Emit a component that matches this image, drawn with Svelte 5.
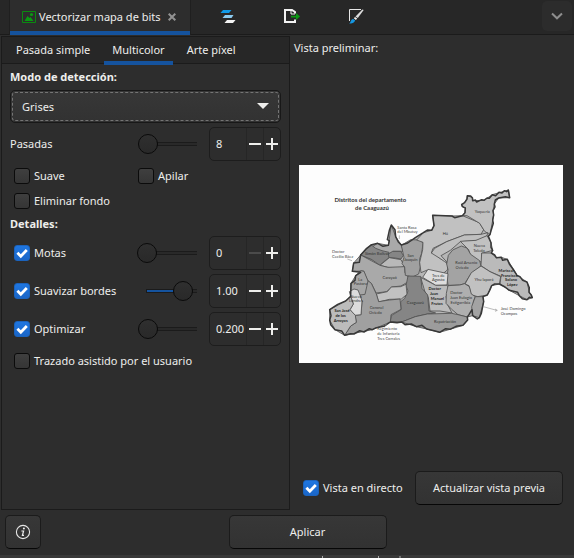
<script>
  let mode = $state('Grises');
  let scans = $state({ id: 'scans', label: 'Pasadas', value: '8', pos: 2 });
  let details = $state([
    { id: 'speckles', label: 'Motas', value: '0', pos: 0, on: true, atMin: true },
    { id: 'smooth', label: 'Suavizar bordes', value: '1.00', pos: 90, on: true },
    { id: 'optimize', label: 'Optimizar', value: '0.200', pos: 2, on: true }
  ]);
  let live = $state(true);

  const outline =
    'M403 107L411 98L412 84L403 80L401 73L410 68L417 57L418 47L428 48L433 53L434 62L442 60L446 66L461 59L468 61L477 54L484 55L493 44L503 47L513 37L522 39L529 32L536 35L541 30L545 53L532 50L512 54L502 60L499 72L501 81L495 92L497 105L494 120L496 130L490 149L486 164L481 168L489 188L489 202L494 211L490 219L500 225L505 233L520 232L524 241L538 238L544 252L557 270L567 286L576 290L584 301L597 306L604 323L603 337L610 345L613 353L604 352L597 359L583 356L574 347L569 337L544 331L531 321L514 312L500 312L491 317L485 331L478 345L465 350L467 365L460 400L454 413L448 417L434 407L432 389L423 404L418 411L419 420L405 436L384 439L366 448L353 446L335 457L318 452L296 447L282 436L265 440L250 432L231 434L221 426L207 428L187 426L168 439L145 443L133 449L124 446L108 456L95 452L78 462L68 461L50 466L41 453L21 449L8 434L5 420L9 407L5 389L29 373L53 363L68 349L69 310L81 301L83 287L98 277L73 274L77 249L94 247L98 225L116 205L131 194L149 190L165 199L181 196L184 182L178 179L184 151L190 135L201 149L203 170L211 186L220 195L239 189L262 173L286 158L298 150L311 151L318 137L314 106L372 108L380 113Z';

  const districts = [
    { fill: '#a9a9a9', d: 'M98 225L123 206L149 190L181 196L190 135L203 170L220 195L226 214L195 214L160 250L130 238Z' },
    { fill: '#858585', d: 'M100 222L129 194L143 205L162 212L183 217L184 233L170 243L156 256L130 238L98 225Z' },
    { fill: '#858585', d: 'M181 222L194 214L218 214L226 226L219 237L201 234L183 233Z' },
    { fill: '#b9b9b9', d: 'M156 256L184 233L219 239L230 260L205 266L180 262Z' },
    { fill: '#a9a9a9', d: 'M77 249L98 225L156 256L179 262L230 260L231 278L241 291L241 305L219 318L191 321L176 335L144 339L130 310L119 303L107 273L73 274Z' },
    { fill: '#a0a0a0', d: 'M220 196L248 179L277 180L285 190L281 220L275 236L277 261L272 282L253 291L232 286L230 261L222 251L228 232Z' },
    { fill: '#c1c1c1', d: 'M286 158L311 151L318 137L314 106L372 108L403 107L454 128L467 149L459 163L409 165L356 185L315 205L310 219L321 220L337 236L351 242L360 257L358 270L346 280L328 278L298 270L279 278L275 247L284 209L285 187L266 180Z' },
    { fill: '#c1c1c1', d: 'M417 107L403 107L411 98L412 84L401 78L417 57L418 47L434 53L434 62L468 61L493 44L541 30L545 53L512 54L499 72L495 92L497 105L486 164L470 154L455 130Z' },
    { fill: '#bfbfbf', d: 'M310 219L320 205L356 185L409 165L459 163L480 158L476 169L449 181L397 185L367 211L339 227L361 251L350 245L337 236Z' },
    { fill: '#c1c1c1', d: 'M397 184L444 181L477 167L489 188L494 211L461 220L463 247L431 237L422 209Z' },
    { fill: '#a3a3a3', d: 'M361 226L374 210L400 198L417 204L428 223L455 242L459 258L429 281L410 311L395 315L360 316L357 289L360 269L356 252Z' },
    { fill: '#bababa', d: 'M461 219L490 219L505 233L520 232L538 238L567 286L597 306L604 337L613 353L597 359L574 347L544 331L516 312L519 289L486 275L459 257Z' },
    { fill: '#c1c1c1', d: 'M430 278L459 258L486 275L518 290L514 312L491 317L478 345L449 350L429 344L423 317L411 312Z' },
    { fill: '#dddddd', d: 'M284 292L300 268L360 281L357 315L323 316Z' },
    { fill: '#bcbcbc', d: 'M278 292L323 316L358 316L364 328L354 350L359 374L372 399L336 393L306 393L301 352L291 336Z' },
    { fill: '#afafaf', d: 'M360 317L395 315L410 311L424 320L430 342L442 350L436 365L434 407L418 411L390 404L371 388L354 370L355 340Z' },
    { fill: '#a3a3a3', d: 'M442 350L465 350L467 365L454 413L434 407L431 380Z' },
    { fill: '#858585', d: 'M240 288L278 289L282 325L299 345L303 393L323 399L298 402L262 410L221 426L187 424L190 407L219 389L218 365L230 355L240 333L234 317Z' },
    { fill: '#c1c1c1', d: 'M145 342L178 335L190 321L218 320L234 313L237 343L220 357L184 358L152 366Z' },
    { fill: '#a0a0a0', d: 'M120 302L130 310L145 342L152 365L184 360L216 357L219 388L189 404L187 426L133 449L50 466L68 438L85 427L81 406L99 404L102 365L94 351L111 323Z' },
    { fill: '#a6a6a6', d: 'M83 287L98 272L108 274L120 303L111 343L68 349L69 310Z' },
    { fill: '#dcdcdc', d: 'M68 349L64 335L78 327L90 330L97 348L102 363L99 404L80 406L66 389L76 372Z' },
    { fill: '#bcbcbc', d: 'M5 389L53 363L68 349L76 372L66 389L82 406L85 427L68 438L50 466L21 449L5 420Z' },
    { fill: '#9c9c9c', d: 'M221 426L262 410L298 402L371 400L390 404L418 411L419 420L405 436L366 448L335 457L296 447L265 440Z' }
  ];

  const names = [
    [463, 100, 'Yaquería'], [352, 165, 'Hú'], [454, 201, 'Nueva'], [453, 216, 'Toledo'],
    [248, 230, 'San'], [248, 244, 'Joaquín'], [147, 226, 'Simón Bolívar'],
    [415, 251, 'Raúl Arsenio'], [402, 267, 'Oviedo'], [468, 303, 'Yhu Iaporá'],
    [185, 298, 'Carayaó'], [331, 290, 'Tres de'], [331, 303, 'Agosto'],
    [97, 302, 'La'], [97, 316, 'Pastora'], [84, 353, 'Nueva'], [84, 366, 'Londres'],
    [146, 386, 'Coronel'], [142, 401, 'Oviedo'], [262, 373, 'Caaguazú'],
    [385, 341, 'Doctor'], [399, 357, 'Juan Eulogio'], [397, 372, 'Estigarribia'],
    [351, 430, 'Repatriación']
  ];
  const boldNames = [
    [534, 276, 'Mariscal'], [544, 290, 'Francisco'], [549, 304, 'Solano'], [553, 319, 'López'],
    [320, 329, 'Doctor'], [318, 344, 'Juan'], [328, 360, 'Manuel'], [327, 376, 'Frutos'],
    [42, 397, 'San José'], [38, 412, 'de los'], [38, 427, 'Arroyos']
  ];
  const outer = [
    [208, 146, 'Santa Rosa'], [208, 160, 'del Mbutuy'], [12, 220, 'Doctor'], [12, 234, 'Cecilio Báez'],
    [148, 451, 'Regimiento'], [148, 466, 'de Infantería'], [148, 480, 'Tres Corrales'],
    [518, 389, 'José Domingo'], [518, 404, 'Ocampos']
  ];
</script>

{#snippet check()}
  <svg class="tick" viewBox="0 0 16 16" aria-hidden="true"><path d="M3.4 7.8L6.8 11.2L12.8 5" /></svg>
{/snippet}

{#snippet spin(row)}
  <input
    class="slider" type="range" min="0" max="100" aria-label={row.label}
    bind:value={row.pos} style="--fill: {row.pos > 50 ? row.pos : 0}%"
  />
  <div class="spin">
    <input type="text" inputmode="decimal" aria-label="{row.label}: valor" id={row.id} bind:value={row.value} />
    <button type="button" aria-label="Reducir" disabled={row.atMin}>
      <svg viewBox="0 0 12 12"><path d="M0 6H12" /></svg>
    </button>
    <button type="button" aria-label="Aumentar">
      <svg viewBox="0 0 12 12"><path d="M0 6H12M6 0V12" /></svg>
    </button>
  </div>
{/snippet}

<div class="dialog">
  <header class="dock">
    <div class="doc-tab">
      <svg class="trace" viewBox="0 0 14 12" aria-hidden="true">
        <path d="M.5.5H13.5V11.5H.5Z" fill="none" stroke="#0a8a10" />
        <path d="M2.5 10L5.5 5L7.5 7L8.5 6L11.5 10Z" fill="#0a9a12" />
        <circle cx="9.5" cy="3.5" r="1.6" fill="#0a9a12" />
      </svg>
      <span>Vectorizar mapa de bits</span>
      <button type="button" class="close" aria-label="Cerrar">
        <svg viewBox="0 0 8 8"><path d="M.7.7L7.3 7.3M7.3.7L.7 7.3" /></svg>
      </button>
    </div>
    <button type="button" class="icon-tab" aria-label="Capas y objetos">
      <svg viewBox="0 0 16 16">
        <path d="M3 2H11.5L9 5H.5Z" fill="#109ae8" />
        <path d="M5 7H13.5L11.5 10H2.5Z" fill="#8ccbf0" />
        <path d="M7 12H15.5L13 15H4.5Z" fill="#f4f4f4" />
      </svg>
    </button>
    <button type="button" class="icon-tab" aria-label="Exportar">
      <svg viewBox="0 0 16 16">
        <path d="M11 5.5V4L8 2H1V14H11V11.5" fill="none" stroke="#f2f2f2" stroke-width="2" />
        <path d="M7 2V6H11" fill="none" stroke="#f2f2f2" />
        <path d="M7 7.8H12V5L16 8.5L12 12V9.4H7Z" fill="#0a9a12" />
      </svg>
    </button>
    <button type="button" class="icon-tab" aria-label="Relleno y borde">
      <svg viewBox="0 0 16 16">
        <path d="M1.5 13V1.5H13" fill="none" stroke="#e8e8e8" />
        <path d="M15.7 2L9.8 10L7.5 8.4L14.4 1.6Z" fill="#dcdcdc" />
        <path d="M7 8.9L9.2 10.6L7.9 11.9L5.8 10.3Z" fill="#f2f2f2" />
        <path d="M5.2 10.9L7.2 12.6C6.2 15.3 3.7 15.8 1.2 15.4C3 14.2 2.5 11.5 5.2 10.9Z" fill="#1597e2" />
      </svg>
    </button>
    <button type="button" class="menu" aria-label="Menú de paneles">
      <svg viewBox="0 0 12 8"><path d="M1 1.5L6 6.3L11 1.5" /></svg>
    </button>
  </header>

  <main>
    <section class="settings">
      <div class="tabs" role="tablist">
        <button type="button" role="tab" aria-selected="false">Pasada simple</button>
        <button type="button" role="tab" aria-selected="true" class="active">Multicolor</button>
        <button type="button" role="tab" aria-selected="false">Arte píxel</button>
      </div>
      <div class="form">
        <label class="heading" for="mode">Modo de detección:</label>
        <div class="combo">
          <select id="mode" bind:value={mode}>
            <option>Grises</option>
            <option>Colores</option>
          </select>
          <svg viewBox="0 0 12 6" aria-hidden="true"><path d="M0 0H12L6 6Z" /></svg>
        </div>
        <div class="row">
          <label class="name" for="scans">{scans.label}</label>
          {@render spin(scans)}
        </div>
        <div class="checks">
          <label class="check"><input type="checkbox" />{@render check()}Suave</label>
          <label class="check"><input type="checkbox" />{@render check()}Apilar</label>
          <label class="check"><input type="checkbox" />{@render check()}Eliminar fondo</label>
        </div>
        <h2 class="heading">Detalles:</h2>
        <div class="details">
          {#each details as row}
            <div class="row">
              <label class="check name"><input type="checkbox" bind:checked={row.on} />{@render check()}{row.label}</label>
              {@render spin(row)}
            </div>
          {/each}
        </div>
        <label class="check assist"><input type="checkbox" />{@render check()}Trazado asistido por el usuario</label>
      </div>
    </section>

    <section class="preview">
      <h2>Vista preliminar:</h2>
      <div class="canvas">
        <svg class="map" viewBox="-87 -45 792 594" role="img" aria-label="Distritos del departamento de Caaguazú">
          <path d={outline} fill="#b6b6b6" />
          <g stroke="#505050" stroke-width="2.5" stroke-linejoin="round">
            {#each districts as area}<path d={area.d} fill={area.fill} />{/each}
          </g>
          <path d={outline} fill="none" stroke="#383838" stroke-width="4.5" stroke-linejoin="round" />
          <path d="M466 380L506 391M501 387L508 391L501 394M174 430V438M214 166V177M58 237L72 242" fill="none" stroke="#999" stroke-width="2" />
          <g class="title">
            <text x="127" y="66">Distritos del departamento</text>
            <text x="132" y="90">de Caaguazú</text>
          </g>
          <g class="inner">{#each names as [x, y, t]}<text {x} {y}>{t}</text>{/each}</g>
          <g class="inner strong">{#each boldNames as [x, y, t]}<text {x} {y}>{t}</text>{/each}</g>
          <g class="outer">{#each outer as [x, y, t]}<text {x} {y}>{t}</text>{/each}</g>
        </svg>
      </div>
      <div class="actions">
        <label class="check"><input type="checkbox" bind:checked={live} />{@render check()}Vista en directo</label>
        <button type="button" class="btn">Actualizar vista previa</button>
      </div>
    </section>
  </main>

  <footer>
    <button type="button" class="btn info" aria-label="Información">
      <svg viewBox="0 0 16 16">
        <circle cx="8" cy="8" r="6.6" fill="none" stroke="#e6e6e6" stroke-width="1.1" />
        <circle cx="8.9" cy="4.6" r="1" fill="#eee" />
        <path d="M6.4 7H8.6L7.4 11.3H9" fill="none" stroke="#eee" stroke-width="1.2" />
      </svg>
    </button>
    <button type="button" class="btn apply">Aplicar</button>
  </footer>
  <div class="status">
    <svg viewBox="0 0 80 3" aria-hidden="true"><path d="M1.5 1V3M57.5 1V3M79 1V3" /></svg>
  </div>
</div>

<style>
  :global(body) { background: #2d2d2d; }
  .dialog {
    box-sizing: border-box;
    min-height: 100vh;
    display: flex;
    flex-direction: column;
    background: #2d2d2d;
    color: #eeeeec;
    font: 11px/16px "Noto Sans", "Open Sans", sans-serif;
  }
  .dialog :global(*) { box-sizing: border-box; }
  button, input, select { font: inherit; color: inherit; margin: 0; padding: 0; }
  button { border: 0; background: none; }
  svg { display: block; flex: none; }
  h2 { margin: 0; font: inherit; }

  .dock { display: flex; height: 35px; padding-left: 9px; background: #272727; border-bottom: 1px solid #1b1b1b; }
  .doc-tab {
    display: flex; align-items: center; width: 182px; height: 35px; padding: 0 12px 2px; gap: 3px;
    background: #2d2d2d; border: solid #1f1f1f; border-width: 0 1px; box-shadow: inset 0 -4px #15539e;
    white-space: nowrap;
  }
  .trace { width: 14px; height: 12px; }
  .close { padding: 4px; }
  .close svg { width: 8px; height: 8px; stroke: #929292; stroke-width: 2; }
  .icon-tab { display: grid; place-items: center; width: 64px; padding-bottom: 3px; }
  .doc-tab + .icon-tab { margin-left: 5px; }
  .icon-tab svg { width: 16px; height: 16px; }
  .menu { display: grid; place-items: center; width: 30px; height: 30px; margin: 1px 2px 0 auto; background: #2c2c2c; border-radius: 5px; }
  .menu svg { width: 12px; height: 8px; fill: none; stroke: #8e8e8e; stroke-width: 2; }

  main { flex: 1; display: flex; padding: 1px 0 0 1px; }
  .settings { width: 289px; flex: none; border: 1px solid #1b1b1b; }
  .tabs { display: flex; gap: 6px; height: 27px; padding-left: 6px; background: #272727; border-bottom: 1px solid #1b1b1b; }
  .tabs button { height: 28px; padding: 2px 8px 0; line-height: 22px; display: flex; white-space: nowrap; }
  .tabs .active { box-shadow: inset 0 -4px #15539e; }
  .form { padding: 4px 8px 4px; }
  .heading { display: block; font-weight: 700; line-height: 18px; }
  .combo { position: relative; margin-top: 4px; }
  .combo select {
    appearance: none; display: block; width: 100%; height: 33px; padding: 0 11px;
    background: linear-gradient(#373737, #323232); border: 1px solid #181818; border-radius: 5px;
    outline: 1px dashed #747474; outline-offset: -3px;
  }
  .combo svg { position: absolute; right: 12px; top: 13px; width: 12px; height: 6px; fill: #eeeeec; pointer-events: none; }

  .row { display: flex; align-items: center; }
  .combo + .row { margin-top: 4px; }
  .name { flex: 1; white-space: nowrap; }
  .check { display: flex; align-items: center; position: relative; padding-left: 4px; gap: 4px; white-space: nowrap; }
  .check input {
    appearance: none; width: 16px; height: 16px; flex: none;
    background: linear-gradient(#3f3f3f, #353535); border: 1px solid #0b0b0b; border-radius: 3px;
  }
  .check input:checked { background: linear-gradient(#1f76e0, #1a66c8); border-color: #1b63bd; }
  .tick { display: none; width: 16px; height: 16px; margin-left: -20px; fill: none; stroke: #fff; stroke-width: 2.8; pointer-events: none; }
  .check input:checked + .tick { display: block; }

  .slider {
    appearance: none; width: 60px; height: 20px; margin-right: 12px;
    background:
      linear-gradient(90deg, #15539e var(--fill), #292929 0) no-repeat 100% 50% / calc(100% - 10px) 2px,
      linear-gradient(#1b1b1b, #1b1b1b) no-repeat 100% 50% / calc(100% - 9px) 4px;
  }
  .slider::-webkit-slider-runnable-track { height: 20px; background: none; }
  .slider::-webkit-slider-thumb {
    appearance: none; width: 20px; height: 20px; border: 1px solid #0a0a0a; border-radius: 50%;
    background: linear-gradient(#2f2f2f, #292929);
  }
  .spin { display: flex; width: 72px; height: 34px; border: 1px solid #1d1d1d; border-radius: 5px; overflow: hidden; }
  .spin input { flex: 1; min-width: 0; padding-left: 6px; border: 0; background: none; outline: none; font-size: 12px; }
  .spin button { display: grid; place-items: center; width: 17px; border-left: 1px solid #262626; }
  .spin input { font-size: 11px; }
  .spin svg { width: 12px; height: 12px; stroke: #eeeeec; stroke-width: 2; }
  .spin button:disabled svg { stroke: #4b4b4b; }

  .checks { display: grid; grid-template-columns: 124px 1fr; row-gap: 9px; margin: 7px 0 6px; }
  .details { display: grid; gap: 4px; margin-top: 3px; }
  .assist { margin-top: 7px; }

  .preview { flex: 1; min-width: 0; display: flex; flex-direction: column; padding: 4px 11px 5px 9px; }
  .preview h2 { margin-left: -5px; }
  .canvas { flex: 1; display: grid; align-items: center; }
  .map { width: 100%; background: #fdfdfd; }
  .map text { font-family: Lato, "Open Sans", sans-serif; fill: #333; }
  .title text { font-size: 18px; font-weight: 700; text-anchor: middle; }
  .inner text { font-size: 12px; text-anchor: middle; }
  .strong text { font-weight: 700; fill: #222; }
  .outer text { font-size: 12px; fill: #444; }
  .actions { display: flex; align-items: center; justify-content: space-between; }

  .btn {
    height: 34px; background: linear-gradient(#373737, #323232); border: 1px solid #1b1b1b;
    border-bottom-color: #070707; border-radius: 5px; white-space: nowrap;
  }
  .actions .btn { width: 148px; }
  footer { display: flex; padding: 5px 0 6px 5px; }
  .info { display: grid; place-items: center; width: 36px; }
  .info svg { width: 16px; height: 16px; }
  .apply { width: 158px; margin: 0 auto; }
  .status { height: 3px; padding-left: 56%; background: #383838; }
  .status svg { width: 80px; height: 3px; stroke: #aaa; }
</style>
